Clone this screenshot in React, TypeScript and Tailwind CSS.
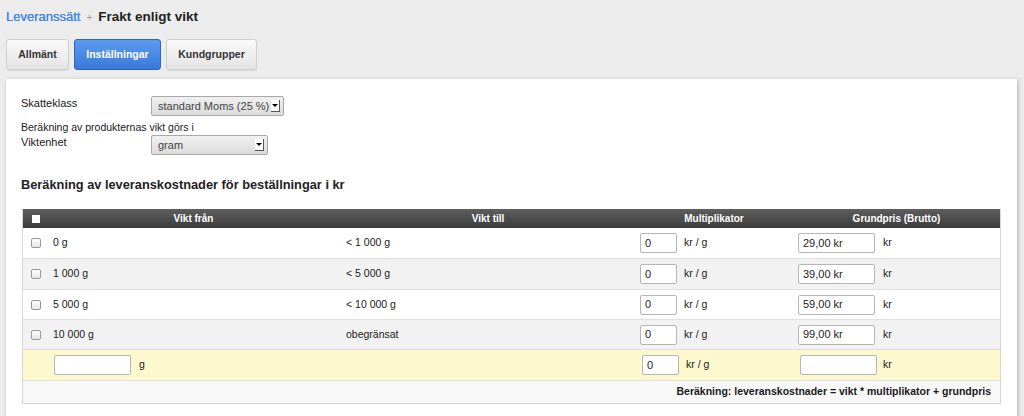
import React from 'react'

const rows = [
  { fran: '0 g', till: '< 1 000 g', mult: '0', pris: '29,00 kr', h: 'h-[31px]' },
  { fran: '1 000 g', till: '< 5 000 g', mult: '0', pris: '39,00 kr', h: 'h-[31px]' },
  { fran: '5 000 g', till: '< 10 000 g', mult: '0', pris: '59,00 kr', h: 'h-[30px]' },
  { fran: '10 000 g', till: 'obegränsat', mult: '0', pris: '99,00 kr', h: 'h-[30px]' },
]

function Select({ value, width }: { value: string; width: string }) {
  return (
    <div className={`${width} h-[20px] flex items-center justify-between border border-[#a9a9a9] rounded-[2px] bg-gradient-to-b from-[#f0f0f0] to-[#dcdcdc] pl-[6px] pr-[3px] text-[11px] text-[#444]`}>
      <span>{value}</span>
      <span className="w-[9px] h-[12px] bg-white border-r border-b border-[#555] flex items-center justify-center">
        <span className="w-0 h-0 border-l-[3px] border-r-[3px] border-t-[3px] border-l-transparent border-r-transparent border-t-black" />
      </span>
    </div>
  )
}

function Input({ value, width }: { value: string; width: string }) {
  return (
    <div className={`${width} h-[20px] border border-[#b5b5b5] rounded-[2px] bg-white px-[4px] flex items-center text-[11px] text-[#222]`}>
      {value}
    </div>
  )
}

function Check() {
  return <span className="block w-[10px] h-[10px] border border-[#999] rounded-[2px] bg-gradient-to-b from-white to-[#e6e6e6]" />
}

export default function App() {
  return (
    <main className="w-[1024px] h-[416px] overflow-hidden bg-[#ececec] font-['Liberation_Sans',Arial,sans-serif] text-[10.5px] text-[#1a1a1a]">
      <div className="px-[6px] pt-[10px] flex items-center gap-[6px] h-[24px]">
        <span className="text-[13px] text-[#3f86e8] [text-shadow:0_0_0.4px_#3f86e8]">Leveranssätt</span>
        <span className="text-[10px] text-[#999]">+</span>
        <span className="text-[13.5px] font-bold text-[#222]">Frakt enligt vikt</span>
      </div>

      <div className="flex gap-[5px] px-[6px] mt-[15px]">
        <div className="w-[63px] h-[31px] flex items-center justify-center rounded-[3px] border border-[#cfcfcf] bg-gradient-to-b from-[#fafafa] to-[#e4e4e4] text-[10.5px] font-bold text-[#333] shadow-[0_1px_1px_rgba(0,0,0,0.08)]">Allmänt</div>
        <div className="w-[87px] h-[31px] flex items-center justify-center rounded-[3px] border border-[#2f66b8] bg-gradient-to-b from-[#5b9cf0] to-[#3a78d8] text-[10.5px] font-bold text-white">Inställningar</div>
        <div className="w-[91px] h-[31px] flex items-center justify-center rounded-[3px] border border-[#cfcfcf] bg-gradient-to-b from-[#fafafa] to-[#e4e4e4] text-[10.5px] font-bold text-[#333] shadow-[0_1px_1px_rgba(0,0,0,0.08)]">Kundgrupper</div>
      </div>

      <div className="ml-[6px] mr-[7px] mt-[9px] bg-white shadow-[1px_1px_4px_rgba(0,0,0,0.25)] pl-[15px] pr-[15px] pt-[16px] h-[400px]">
        <div className="flex items-center h-[22px]">
          <span className="w-[130px] -mt-[6px] text-[11px]">Skatteklass</span>
          <Select value="standard Moms (25 %)" width="w-[133px]" />
        </div>
        <div className="mt-[3px] h-[14px] leading-[14px]">Beräkning av produkternas vikt görs i</div>
        <div className="flex items-center h-[22px]">
          <span className="w-[130px] -mt-[6px] text-[11px]">Viktenhet</span>
          <Select value="gram" width="w-[117px]" />
        </div>

        <h2 className="mt-[19px] text-[12.8px] font-bold text-[#222]">Beräkning av leveranskostnader för beställningar i kr</h2>

        <div className="mt-[15px] ml-[1px] w-[979px] border border-[#d6d6d6] border-t-0">
          <div className="grid grid-cols-[23px_295px_294px_158px_1fr] h-[19px] bg-gradient-to-b from-[#5e5e5e] to-[#3c3c3c] text-white font-bold text-[10px] items-center">
            <span className="pl-[9px]"><span className="block w-[8px] h-[8px] bg-white" /></span>
            <span className="text-center">Vikt från</span>
            <span className="text-center">Vikt till</span>
            <span className="text-center">Multiplikator</span>
            <span className="text-center">Grundpris (Brutto)</span>
          </div>
          {rows.map((r, i) => (
            <div key={i} className={`grid grid-cols-[23px_295px_294px_158px_1fr] ${r.h} items-center border-b border-[#e0e0e0] ${i % 2 ? 'bg-[#f2f2f2]' : 'bg-white'}`}>
              <span className="pl-[8px]"><Check /></span>
              <span className="pl-[7px]">{r.fran}</span>
              <span className="pl-[5px]">{r.till}</span>
              <span className="pl-[5px] flex items-center gap-[7px]">
                <Input value={r.mult} width="w-[37px]" />
                <span>kr / g</span>
              </span>
              <span className="pl-[5px] flex items-center gap-[8px]">
                <Input value={r.pris} width="w-[77px]" />
                <span>kr</span>
              </span>
            </div>
          ))}
          <div className="grid grid-cols-[23px_295px_294px_158px_1fr] h-[31px] items-center border-b border-[#e0e0e0] bg-[#fdf8cd]">
            <span />
            <span className="pl-[8px] flex items-center gap-[8px]">
              <Input value="" width="w-[77px]" />
              <span>g</span>
            </span>
            <span />
            <span className="pl-[7px] flex items-center gap-[7px]">
              <Input value="0" width="w-[37px]" />
              <span>kr / g</span>
            </span>
            <span className="pl-[7px] flex items-center gap-[6px]">
              <Input value="" width="w-[77px]" />
              <span>kr</span>
            </span>
          </div>
          <div className="h-[22px] bg-[#f8f8f8] flex items-center justify-end pr-[9px] font-bold text-[10.5px]">
            Beräkning: leveranskostnader = vikt * multiplikator + grundpris
          </div>
        </div>
      </div>
    </main>
  )
}
